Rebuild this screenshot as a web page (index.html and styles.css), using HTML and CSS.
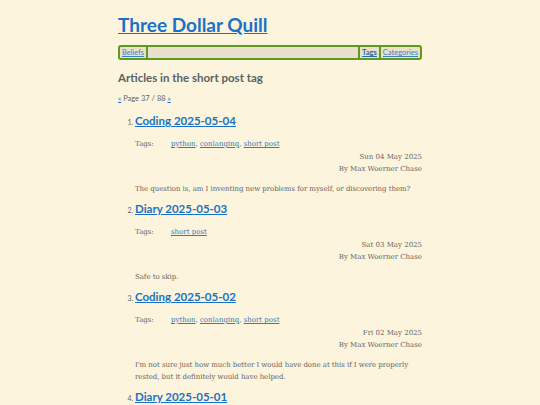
FILE: index.html
```html
<!DOCTYPE html>
<html lang="en">
<head>
<meta charset="utf-8">
<title>Three Dollar Quill</title>
<link rel="stylesheet" href="styles.css">
</head>
<body>
<div class="page">
  <header class="site-header">
    <h1 class="site-title"><a href="#">Three Dollar Quill</a></h1>
    <nav class="nav">
      <a class="nav-item nav-left" href="#">Beliefs</a>
      <span class="nav-fill"></span>
      <a class="nav-item nav-current" href="#">Tags</a>
      <a class="nav-item" href="#">Categories</a>
    </nav>
  </header>
  <main>
    <h2 class="tag-heading">Articles in the short post tag</h2>
    <p class="pager"><a href="#">«</a> Page 37 / 88 <a href="#">»</a></p>
    <ol class="articles" start="1">
      <li class="article">
        <h3 class="article-title"><a href="#">Coding 2025-05-04</a></h3>
        <div class="tags-row"><span class="tags-label">Tags:</span><span class="tags-list"><a href="#">python</a>, <a href="#">conlanging</a>, <a href="#">short post</a></span></div>
        <div class="meta"><div>Sun 04 May 2025</div><div>By Max Woerner Chase</div></div>
        <p class="summary">The question is, am I inventing new problems for myself, or discovering them?</p>
      </li>
      <li class="article">
        <h3 class="article-title"><a href="#">Diary 2025-05-03</a></h3>
        <div class="tags-row"><span class="tags-label">Tags:</span><span class="tags-list"><a href="#">short post</a></span></div>
        <div class="meta"><div>Sat 03 May 2025</div><div>By Max Woerner Chase</div></div>
        <p class="summary">Safe to skip.</p>
      </li>
      <li class="article">
        <h3 class="article-title"><a href="#">Coding 2025-05-02</a></h3>
        <div class="tags-row"><span class="tags-label">Tags:</span><span class="tags-list"><a href="#">python</a>, <a href="#">conlanging</a>, <a href="#">short post</a></span></div>
        <div class="meta"><div>Fri 02 May 2025</div><div>By Max Woerner Chase</div></div>
        <p class="summary">I'm not sure just how much better I would have done at this if I were properly rested, but it definitely would have helped.</p>
      </li>
      <li class="article">
        <h3 class="article-title"><a href="#">Diary 2025-05-01</a></h3>
      </li>
    </ol>
  </main>
</div>
</body>
</html>
```
FILE: styles.css
```css
html, body {
  margin: 0;
  padding: 0;
  background: #fcf4dc;
}
body {
  font-family: "DejaVu Serif", serif;
  color: #555;
}
a { color: #1f6fc0; }
.page {
  width: 304px;
  margin: 0 auto;
  padding-top: 14px;
}
.site-title {
  font-family: Lato, sans-serif;
  font-size: 19px;
  font-weight: 700;
  margin: 0;
  line-height: 22px;
}
.site-title a { color: #1a72c6; }
.nav {
  display: flex;
  margin-top: 9px;
  border: 2px solid #5d9a1e;
  border-radius: 3px;
  background: #e9e1cc;
  height: 11px;
  font-family: Lato, sans-serif;
  font-size: 7.5px;
  line-height: 11px;
}
.nav-item {
  padding: 0 2px;
  color: #3f7fbf;
}
.nav-left { border-right: 2px solid #5d9a1e; }
.nav-fill { flex: 1; }
.nav-current {
  font-weight: 700;
  border-left: 2px solid #5d9a1e;
  border-right: 2px solid #5d9a1e;
  color: #2a6aa8;
}
.tag-heading {
  font-family: Lato, sans-serif;
  font-size: 11.5px;
  font-weight: 700;
  color: #5a6266;
  margin: 10px 0 0;
  line-height: 16px;
}
.pager {
  font-family: Lato, sans-serif;
  font-size: 7.5px;
  color: #666;
  margin: 8px 0 0;
  line-height: 10px;
}
.articles {
  margin: 8px 0 0;
  padding-left: 17px;
}
.article {
  font-family: Lato, sans-serif;
  font-size: 7px;
  color: #666;
}
.article-title {
  font-family: Lato, sans-serif;
  font-size: 11.5px;
  font-weight: 700;
  margin: 0;
  line-height: 18px;
}
.article-title a { color: #1a72c6; }
.tags-row {
  display: flex;
  font-family: "DejaVu Serif", serif;
  font-size: 7px;
  line-height: 12px;
  margin-top: 8px;
}
.tags-label { width: 36px; }
.tags-list a { color: #3a78b8; }
.meta {
  font-family: "DejaVu Serif", serif;
  font-size: 7px;
  line-height: 12px;
  text-align: right;
  margin-top: 1px;
}
.summary {
  font-family: "DejaVu Serif", serif;
  font-size: 7px;
  letter-spacing: -0.05px;
  line-height: 12px;
  margin: 8px 0 5px;
}
```
